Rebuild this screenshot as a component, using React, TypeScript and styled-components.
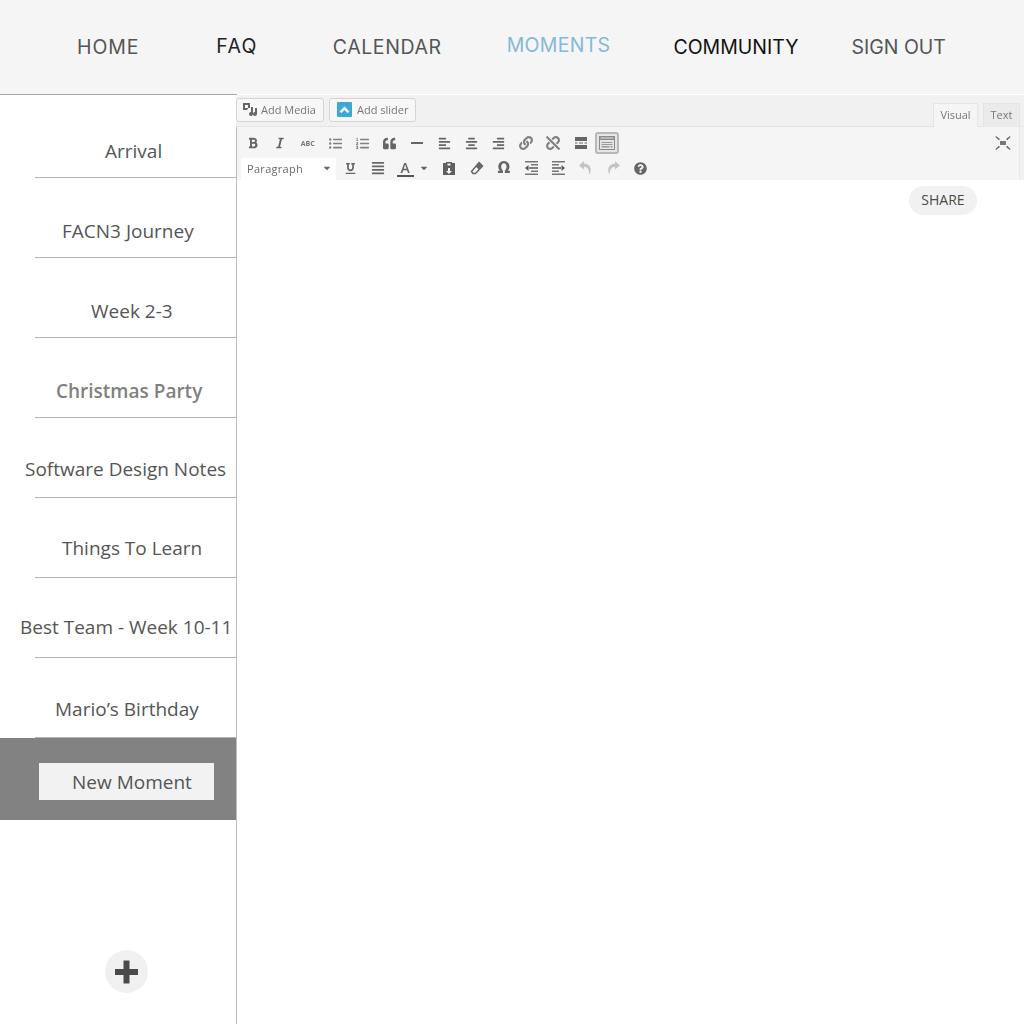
import styled, { createGlobalStyle } from 'styled-components';
import {
    FaBold, FaItalic, FaListUl, FaListOl, FaQuoteLeft, FaAlignLeft, FaAlignCenter, FaAlignRight,
    FaLink, FaUnlink, FaUnderline, FaAlignJustify, FaQuestionCircle, FaCaretDown,
} from 'react-icons/fa';

const GlobalStyle = createGlobalStyle`
    html, body { margin: 0; padding: 0; background: #fff; }
    * { box-sizing: border-box; }
`;

const navItems = [
    { label: 'HOME', gap: 77, lift: 0, track: 0.9, color: '#555' },
    { label: 'FAQ', gap: 77, lift: 2, track: 1.3, color: '#222' },
    { label: 'CALENDAR', gap: 75, lift: 0, track: 0.6, color: '#555' },
    { label: 'MOMENTS', gap: 65, lift: 4, track: 0.3, color: '#86b9d8' },
    { label: 'COMMUNITY', gap: 63, lift: 0, track: 0, color: '#111' },
    { label: 'SIGN OUT', gap: 53, lift: 0, track: 0, color: '#555' },
];

const moments = [
    { label: 'Arrival', left: 105, lift: 0 },
    { label: 'FACN3 Journey', left: 62, lift: 0 },
    { label: 'Week 2-3', left: 91, lift: 0 },
    { label: 'Christmas Party', left: 56, lift: 0, strong: true },
    { label: 'Software Design Notes', left: 25, lift: 2 },
    { label: 'Things To Learn', left: 62, lift: 3 },
    { label: 'Best Team - Week 10-11', left: 20, lift: 4 },
    { label: 'Mario’s Birthday', left: 55, lift: 2 },
];

const App = () => {
    return (
        <Page>
            <GlobalStyle />
            <Header>
                {navItems.map((item) => (
                    <NavLink key={item.label} $gap={item.gap} $lift={item.lift} $track={item.track} $color={item.color}>
                        {item.label}
                    </NavLink>
                ))}
            </Header>
            <Body>
                <Sidebar>
                    <MomentList>
                        {moments.map((m) => (
                            <MomentRow key={m.label} $left={m.left} $lift={m.lift} $strong={m.strong}>
                                {m.label}
                            </MomentRow>
                        ))}
                    </MomentList>
                    <NewMomentBand>
                        <NewMomentInput>New Moment</NewMomentInput>
                    </NewMomentBand>
                    <AddButton aria-label="Add moment">
                        <svg width="26" height="26" viewBox="0 0 26 26">
                            <path d="M9.500 1.500h6v8.500H24v6h-8.500v8.500h-6V16H1v-6h8.500z" fill="#4a4a4a" />
                        </svg>
                    </AddButton>
                </Sidebar>
                <Main>
                    <Editor>
                        <MediaBar>
                            <MediaButton $width={88} $pad={5} $gap={3}>
                                <svg width="16" height="15" viewBox="0 0 16 15">
                                    <path d="M1 1h7v5H6.500L5 8H1z M3 3v3h3V3z M9 5h2v7a2 2 0 1 1-2-2z M13 6h2v6a2 2 0 1 1-2-2z" fill="#666" fillRule="evenodd" />
                                </svg>
                                Add Media
                            </MediaButton>
                            <MediaButton $width={87} $pad={7} $gap={5}>
                                <svg width="15" height="15" viewBox="0 0 15 15">
                                    <rect width="15" height="15" rx="1" fill="#3aa9d8" />
                                    <path d="M2.500 9.500L7.500 4.500l5 5-2 1.500-3-3-3 3z" fill="#fff" />
                                </svg>
                                Add slider
                            </MediaButton>
                            <Tabs>
                                <Tab $active>Visual</Tab>
                                <Tab>Text</Tab>
                            </Tabs>
                        </MediaBar>
                        <ToolRow>
                            <Tool><FaBold size={12} /></Tool>
                            <Tool><FaItalic size={12} /></Tool>
                            <Tool><SmallAbc>ABC</SmallAbc></Tool>
                            <Tool $soft><FaListUl size={13} /></Tool>
                            <Tool $soft><FaListOl size={13} /></Tool>
                            <Tool><FaQuoteLeft size={13} /></Tool>
                            <Tool>
                                <svg width="12" height="12" viewBox="0 0 12 12"><rect y="5" width="12" height="2" fill="#666" /></svg>
                            </Tool>
                            <Tool><FaAlignLeft size={13} /></Tool>
                            <Tool><FaAlignCenter size={13} /></Tool>
                            <Tool><FaAlignRight size={13} /></Tool>
                            <Tool $soft><FaLink size={14} /></Tool>
                            <Tool $soft><FaUnlink size={14} /></Tool>
                            <Tool>
                                <svg width="14" height="12" viewBox="0 0 14 12">
                                    <path d="M1 0h12v4H1z M1 8h12v4H1z M1 5.500h2.500v1H1z M5 5.500h4v1H5z M10.500 5.500H13v1h-2.500z" fill="#666" />
                                </svg>
                            </Tool>
                            <ActiveTool>
                                <svg width="16" height="14" viewBox="0 0 16 14">
                                    <path d="M0 0h16v14H0z M1 4v9h14V4z M1.500 1.500v1h13v-1z" fill="#8a8a8a" fillRule="evenodd" />
                                    <path d="M2.500 6h11v1h-11z M2.500 8h11v1h-11z M2.500 10h8v1.500h-8z M11.500 10h2v1.500h-2z" fill="#999" />
                                </svg>
                            </ActiveTool>
                            <FullscreenIcon>
                                <svg width="16" height="14" viewBox="0 0 16 14">
                                    <path d="M5 5h6v4H5z" fill="#777" />
                                    <path d="M1 0l4 3-1.200 1.200L0.500 1z M15 0l-4 3 1.200 1.200L15.500 1z M1 14l4-3-1.200-1.200L0.500 13z M15 14l-4-3 1.200-1.200L15.500 13z" fill="#666" />
                                </svg>
                            </FullscreenIcon>
                        </ToolRow>
                        <ToolRow>
                            <FormatSelect>
                                Paragraph
                                <FaCaretDown size={10} />
                            </FormatSelect>
                            <Tool><FaUnderline size={11} /></Tool>
                            <Tool><FaAlignJustify size={14} /></Tool>
                            <ColorTool>
                                <ColorLetter>A</ColorLetter>
                                <FaCaretDown size={10} />
                            </ColorTool>
                            <Tool>
                                <svg width="14" height="14" viewBox="0 0 14 14">
                                    <path d="M1 2h3V1h6v1h3v12H1z M5.500 2.500v2h3v-2z M6 7v3H4l3 3 3-3H8V7z" fill="#5f5f5f" fillRule="evenodd" />
                                </svg>
                            </Tool>
                            <Tool>
                                <svg width="14" height="14" viewBox="0 0 14 14">
                                    <path d="M9 1.500l3.500 3.500-7 7.500H3L1.500 10.500z" fill="none" stroke="#666" strokeWidth="1.500" />
                                    <path d="M9 1.500l3.500 3.500-3.500 3.800-3.500-3.500z" fill="#666" />
                                </svg>
                            </Tool>
                            <Tool><OmegaGlyph>Ω</OmegaGlyph></Tool>
                            <Tool>
                                <svg width="15" height="14" viewBox="0 0 15 14">
                                    <path d="M1 0h13v1.500H1z M7 3h7v1.500H7z M7 9.500h7V11H7z M1 12.500h13V14H1z" fill="#777" />
                                    <path d="M4.500 4v6L1 7z M5 6.200h9v1.600H5z" fill="#5a5a5a" />
                                </svg>
                            </Tool>
                            <Tool>
                                <svg width="15" height="14" viewBox="0 0 15 14">
                                    <path d="M1 0h13v1.500H1z M1 3h7v1.500H1z M1 9.500h7V11H1z M1 12.500h13V14H1z" fill="#777" />
                                    <path d="M10.500 4v6L14 7z M1 6.200h9v1.600H1z" fill="#5a5a5a" />
                                </svg>
                            </Tool>
                            <Tool $muted>
                                <svg width="16" height="16" viewBox="0 0 16 16">
                                    <path d="M6 1L1 5.500 6 9.500V7c3 0 5 1.500 5.500 8 2.800-6 1-11-5.500-11.500z" fill="#c4c4c4" />
                                </svg>
                            </Tool>
                            <Tool $muted>
                                <svg width="16" height="16" viewBox="0 0 16 16">
                                    <path d="M10 1l5 4.500-5 4V7C7 7 5 8.500 4.500 15 1.700 9 3.500 4 10 3.500z" fill="#c4c4c4" />
                                </svg>
                            </Tool>
                            <Tool><FaQuestionCircle size={13} /></Tool>
                        </ToolRow>
                    </Editor>
                    <ShareRow>
                        <ShareButton>SHARE</ShareButton>
                    </ShareRow>
                </Main>
            </Body>
        </Page>
    );
}

const Page = styled.div`
    width: 1024px;
    height: 1024px;
    display: flex;
    flex-direction: column;
    overflow: hidden;
    background: #fff;
    font-family: 'Open Sans', sans-serif;
`;

const Header = styled.header`
    height: 94px;
    flex: none;
    display: flex;
    align-items: center;
    background: #f5f5f5;
`;

const NavLink = styled.a<{ $gap: number; $lift: number; $track: number; $color: string }>`
    margin-left: ${(p) => p.$gap}px;
    margin-bottom: ${(p) => p.$lift}px;
    font-family: 'Inter', sans-serif;
    font-size: 19.5px;
    font-weight: 400;
    letter-spacing: ${(p) => p.$track}px;
    white-space: nowrap;
    color: ${(p) => p.$color};
`;

const Body = styled.div`
    flex: 1;
    display: flex;
    min-height: 0;
`;

const Sidebar = styled.aside`
    width: 237px;
    flex: none;
    display: flex;
    flex-direction: column;
    border-top: 1px solid #a8a8a8;
    border-right: 1px solid #bdbdbd;
`;

const MomentList = styled.div`
    padding-top: 3px;
`;

const MomentRow = styled.div<{ $left: number; $lift: number; $strong?: boolean }>`
    position: relative;
    height: 80px;
    display: flex;
    align-items: flex-end;
    padding-left: ${(p) => p.$left}px;
    padding-bottom: ${(p) => 15 + p.$lift}px;
    font-size: 19px;
    line-height: 24px;
    white-space: nowrap;
    font-weight: ${(p) => (p.$strong ? 600 : 400)};
    color: ${(p) => (p.$strong ? '#808080' : '#555')};

    &::after {
        content: '';
        position: absolute;
        left: 35px;
        right: 0;
        bottom: 0;
        height: 1px;
        background: #b4b4b4;
    }
`;

const NewMomentBand = styled.div`
    height: 82px;
    flex: none;
    display: flex;
    align-items: flex-start;
    padding: 25px 0 0 39px;
    background: #828282;
`;

const NewMomentInput = styled.div`
    width: 175px;
    height: 37px;
    display: flex;
    align-items: center;
    padding-left: 33px;
    background: #f2f2f2;
    font-size: 19px;
    color: #555;
`;

const AddButton = styled.button`
    width: 43px;
    height: 43px;
    margin: 130px 0 0 105px;
    padding: 0;
    display: flex;
    align-items: center;
    justify-content: center;
    border: none;
    border-radius: 50%;
    background: #f0f0f0;
`;

const Main = styled.main`
    flex: 1;
    min-width: 0;
    padding-top: 1px;
`;

const Editor = styled.div`
    height: 85px;
    background: #f1f1f1;
    filter: blur(0.4px);
`;

const MediaBar = styled.div`
    height: 32px;
    display: flex;
    align-items: flex-start;
    gap: 5px;
    padding-top: 3px;
    margin-left: -1px;
    background: #f1f1f1;
    border-bottom: 1px solid #e4e4e4;
`;

const MediaButton = styled.div<{ $width: number; $pad: number; $gap: number }>`
    width: ${(p) => p.$width}px;
    height: 24px;
    display: flex;
    align-items: center;
    gap: ${(p) => p.$gap}px;
    padding: 0 0 2px ${(p) => p.$pad}px;
    background: #f7f7f7;
    border: 1px solid #d4d4d4;
    border-radius: 3px;
    font-size: 11px;
    color: #777;
    white-space: nowrap;
`;

const Tabs = styled.div`
    margin-left: auto;
    display: flex;
    gap: 5px;
    padding: 5px 4px 0 0;
`;

const Tab = styled.div<{ $active?: boolean }>`
    height: ${(p) => (p.$active ? 25 : 24)}px;
    width: ${(p) => (p.$active ? 45 : 37)}px;
    display: flex;
    align-items: center;
    justify-content: center;
    padding-bottom: 3px;
    font-size: 11px;
    color: #777;
    background: ${(p) => (p.$active ? '#f5f5f5' : '#ebebeb')};
    border: 1px solid #e4e4e4;
    border-bottom: none;
`;

const Tool = styled.div<{ $muted?: boolean; $soft?: boolean }>`
    width: 27.3px;
    height: 22px;
    flex: none;
    display: flex;
    align-items: center;
    justify-content: center;
    color: ${(p) => (p.$muted ? '#c4c4c4' : p.$soft ? '#808080' : '#666')};
`;

const ToolRow = styled.div`
    position: relative;
    height: 27px;
    margin-right: 4px;
    display: flex;
    align-items: flex-end;
    padding-left: 2.5px;
    background: #f5f5f5;
    border-right: 1px solid #e8e8e8;
    color: #666;

    & + & {
        height: 26px;
        padding-left: 4px;
    }

    & + & ${Tool} {
        padding-bottom: 2px;
    }
`;

const ActiveTool = styled(Tool)`
    width: 24px;
    margin-left: 0.5px;
    border: 2px solid #b8b8b8;
    border-radius: 3px;
    background: #e6e6e6;
`;

const FullscreenIcon = styled.div`
    position: absolute;
    right: 8px;
    top: 9px;
    display: flex;
`;

const SmallAbc = styled.span`
    font-size: 7px;
    font-weight: 700;
    color: #777;
`;

const FormatSelect = styled.div`
    width: 95px;
    height: 22px;
    margin-right: 1px;
    display: flex;
    align-items: center;
    justify-content: space-between;
    padding: 0 4px 2px 6px;
    background: #fff;
    font-size: 11px;
    letter-spacing: 0.3px;
    color: #6a6a6a;
`;

const ColorTool = styled.div`
    width: 44px;
    height: 22px;
    flex: none;
    display: flex;
    align-items: center;
    gap: 5px;
    padding: 0 0 2px 5px;
`;

const ColorLetter = styled.span`
    width: 17px;
    font-size: 14px;
    line-height: 15px;
    font-weight: 600;
    text-align: center;
    color: #666;
    border-bottom: 2px solid #555;
`;

const OmegaGlyph = styled.span`
    font-family: 'DejaVu Sans', sans-serif;
    font-size: 15px;
    font-weight: 700;
    color: #666;
`;

const ShareRow = styled.div`
    display: flex;
    justify-content: flex-end;
    padding: 6px 47px 0 0;
`;

const ShareButton = styled.button`
    width: 68px;
    height: 29px;
    padding: 0 0 2px;
    border: none;
    border-radius: 15px;
    background: #f1f1f1;
    font-family: 'Open Sans', sans-serif;
    font-size: 14px;
    font-weight: 500;
    color: #4a4a4a;
`;

export default App;
